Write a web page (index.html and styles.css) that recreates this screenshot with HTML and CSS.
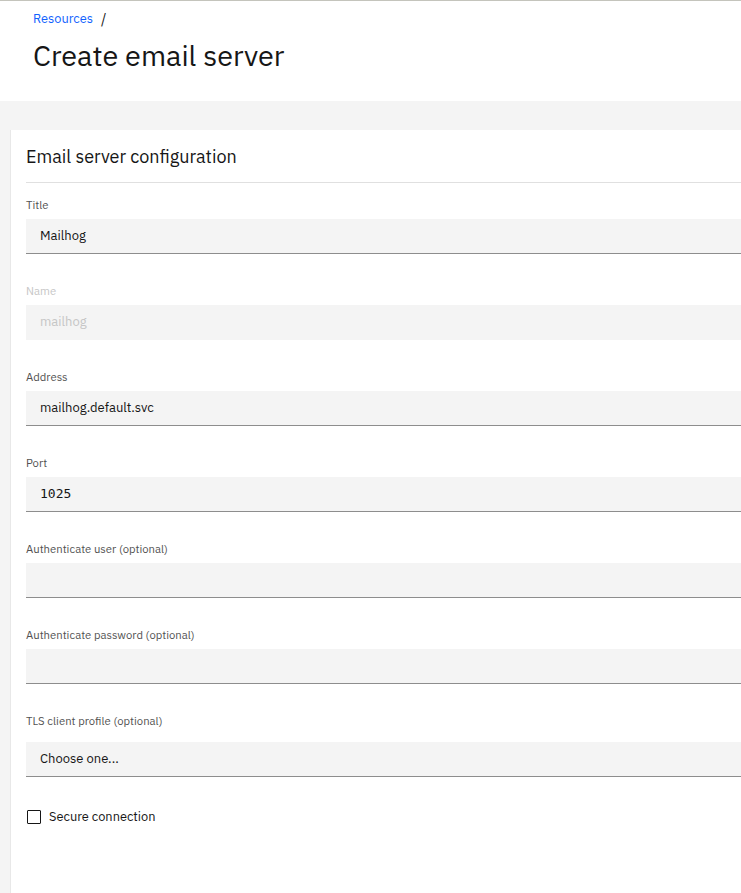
FILE: index.html
```html
<!DOCTYPE html>
<html>
<head>
<meta charset="utf-8">
<link rel="stylesheet" href="styles.css">
</head>
<body>
<div class="page">
  <header class="page-header">
    <nav class="breadcrumb"><a href="#" class="crumb">Resources</a><span class="sep">/</span></nav>
    <h1 class="title">Create email server</h1>
  </header>
  <div class="band"></div>
  <main class="content">
    <section class="panel">
      <h2 class="panel-title">Email server configuration</h2>
      <div class="divider"></div>
      <div class="field">
        <label class="label">Title</label>
        <div class="input">Mailhog</div>
      </div>
      <div class="field">
        <label class="label disabled">Name</label>
        <div class="input is-disabled">mailhog</div>
      </div>
      <div class="field">
        <label class="label">Address</label>
        <div class="input">mailhog.default.svc</div>
      </div>
      <div class="field">
        <label class="label">Port</label>
        <div class="input mono">1025</div>
      </div>
      <div class="field">
        <label class="label">Authenticate user (optional)</label>
        <div class="input"></div>
      </div>
      <div class="field">
        <label class="label">Authenticate password (optional)</label>
        <div class="input"></div>
      </div>
      <div class="field select-field">
        <label class="label">TLS client profile (optional)</label>
        <div class="input">Choose one...</div>
      </div>
      <div class="checkbox-row">
        <span class="checkbox"></span>
        <span class="checkbox-label">Secure connection</span>
      </div>
    </section>
  </main>
</div>
</body>
</html>
```
FILE: styles.css
```css
html, body {
  margin: 0;
  padding: 0;
  background: #f4f4f4;
  overflow: hidden;
}
body {
  font-family: "IBM Plex Sans", Roboto, "Noto Sans", sans-serif;
  color: #161616;
  height: 893px;
}
.page {
  border-top: 1px solid #c4c4bc;
  display: flex;
  flex-direction: column;
  height: 892px;
}
.page-header {
  background: #ffffff;
  padding: 10px 0 0 33px;
  height: 90px;
}
.breadcrumb {
  font-size: 12.8px;
  line-height: 16px;
  display: flex;
  gap: 8px;
  align-items: center;
}
.crumb {
  color: #0f62fe;
  text-decoration: none;
}
.sep {
  color: #161616;
  font-size: 14px;
}
.title {
  margin: 10px 0 0 0;
  font-size: 28.8px;
  font-weight: 400;
  line-height: 36px;
  letter-spacing: 0;
}
.band {
  height: 29px;
  background: #f4f4f4;
}
.content {
  flex: 1;
  padding-left: 10px;
  display: flex;
}
.panel {
  flex: 1;
  background: #ffffff;
  border-left: 1px solid #e8e8e8;
  padding: 13px 0 0 15px;
}
.panel-title {
  margin: 0;
  font-size: 18px;
  line-height: 28px;
  font-weight: 400;
}
.divider {
  height: 1px;
  background: #e0e0e0;
  margin: 11px 0 14px 0;
}
.field {
  display: flex;
  flex-direction: column;
  margin-bottom: 29px;
}
.label {
  font-size: 11.3px;
  line-height: 16px;
  color: #525252;
  margin-bottom: 6px;
}
.label.disabled {
  color: #c6c6c6;
}
.input {
  height: 34px;
  background: #f4f4f4;
  border-bottom: 1px solid #8d8d8d;
  padding-left: 14px;
  font-size: 13px;
  line-height: 34px;
  color: #161616;
}
.input.is-disabled {
  border-bottom: 1px solid transparent;
  color: #c6c6c6;
}
.input.mono {
  font-family: "DejaVu Sans Mono", "Liberation Mono", monospace;
  font-size: 13px;
}
.select-field .label {
  margin-bottom: 13px;
}
.select-field {
  margin-bottom: 32px;
}
.checkbox-row {
  display: flex;
  align-items: center;
  gap: 8px;
  padding-left: 1px;
}
.checkbox {
  width: 12px;
  height: 12px;
  border: 1px solid #161616;
  border-radius: 1px;
}
.checkbox-label {
  font-size: 12.8px;
  line-height: 16px;
}
```
